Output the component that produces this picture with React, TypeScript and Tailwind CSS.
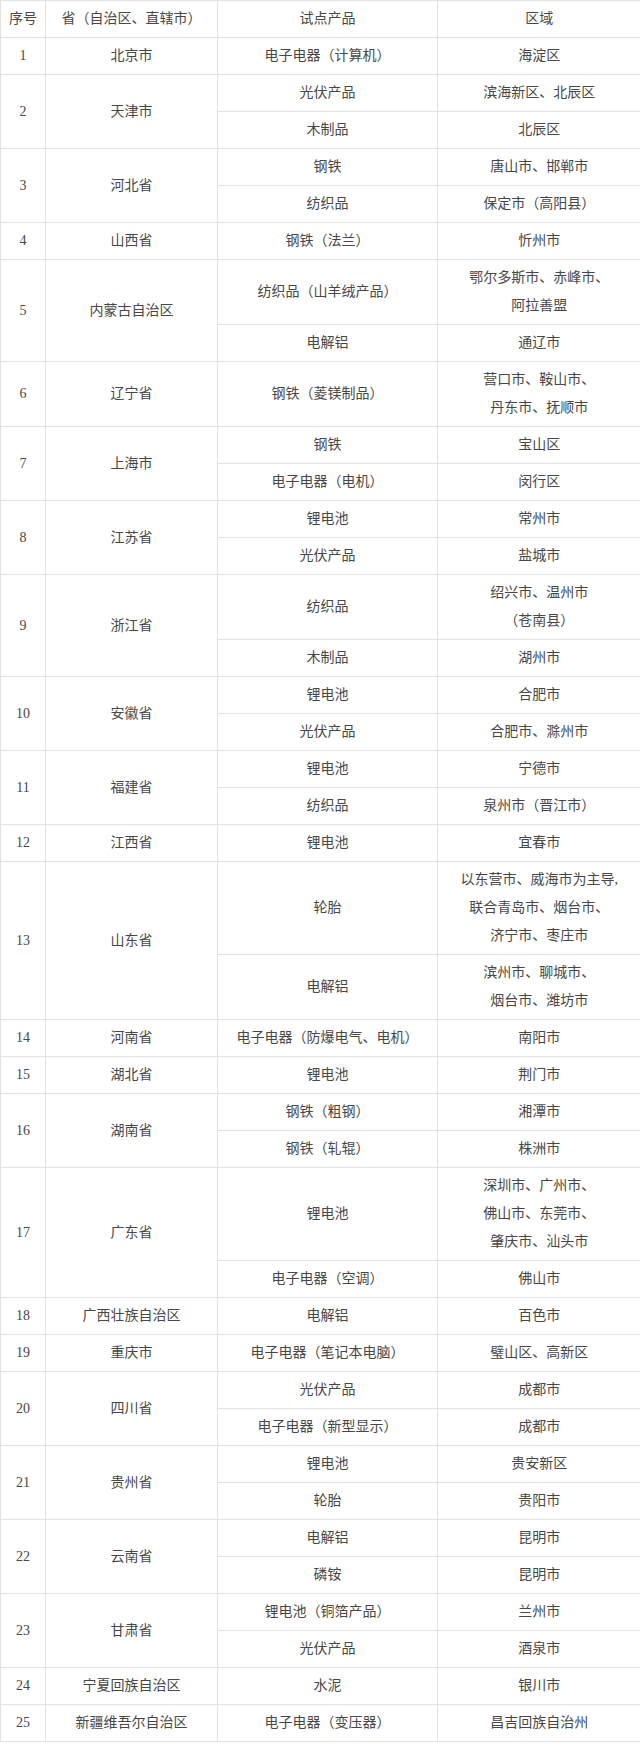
import React from "react";

type Row = { n: number; p: string; items: [string, string][] };

const rows: Row[] = [
  { n: 1, p: "北京市", items: [["电子电器（计算机）", "海淀区"]] },
  { n: 2, p: "天津市", items: [["光伏产品", "滨海新区、北辰区"], ["木制品", "北辰区"]] },
  { n: 3, p: "河北省", items: [["钢铁", "唐山市、邯郸市"], ["纺织品", "保定市（高阳县）"]] },
  { n: 4, p: "山西省", items: [["钢铁（法兰）", "忻州市"]] },
  { n: 5, p: "内蒙古自治区", items: [["纺织品（山羊绒产品）", "鄂尔多斯市、赤峰市、\n阿拉善盟"], ["电解铝", "通辽市"]] },
  { n: 6, p: "辽宁省", items: [["钢铁（菱镁制品）", "营口市、鞍山市、\n丹东市、抚顺市"]] },
  { n: 7, p: "上海市", items: [["钢铁", "宝山区"], ["电子电器（电机）", "闵行区"]] },
  { n: 8, p: "江苏省", items: [["锂电池", "常州市"], ["光伏产品", "盐城市"]] },
  { n: 9, p: "浙江省", items: [["纺织品", "绍兴市、温州市\n（苍南县）"], ["木制品", "湖州市"]] },
  { n: 10, p: "安徽省", items: [["锂电池", "合肥市"], ["光伏产品", "合肥市、滁州市"]] },
  { n: 11, p: "福建省", items: [["锂电池", "宁德市"], ["纺织品", "泉州市（晋江市）"]] },
  { n: 12, p: "江西省", items: [["锂电池", "宜春市"]] },
  { n: 13, p: "山东省", items: [["轮胎", "以东营市、威海市为主导,\n联合青岛市、烟台市、\n济宁市、枣庄市"], ["电解铝", "滨州市、聊城市、\n烟台市、潍坊市"]] },
  { n: 14, p: "河南省", items: [["电子电器（防爆电气、电机）", "南阳市"]] },
  { n: 15, p: "湖北省", items: [["锂电池", "荆门市"]] },
  { n: 16, p: "湖南省", items: [["钢铁（粗钢）", "湘潭市"], ["钢铁（轧辊）", "株洲市"]] },
  { n: 17, p: "广东省", items: [["锂电池", "深圳市、广州市、\n佛山市、东莞市、\n肇庆市、汕头市"], ["电子电器（空调）", "佛山市"]] },
  { n: 18, p: "广西壮族自治区", items: [["电解铝", "百色市"]] },
  { n: 19, p: "重庆市", items: [["电子电器（笔记本电脑）", "璧山区、高新区"]] },
  { n: 20, p: "四川省", items: [["光伏产品", "成都市"], ["电子电器（新型显示）", "成都市"]] },
  { n: 21, p: "贵州省", items: [["锂电池", "贵安新区"], ["轮胎", "贵阳市"]] },
  { n: 22, p: "云南省", items: [["电解铝", "昆明市"], ["磷铵", "昆明市"]] },
  { n: 23, p: "甘肃省", items: [["锂电池（铜箔产品）", "兰州市"], ["光伏产品", "酒泉市"]] },
  { n: 24, p: "宁夏回族自治区", items: [["水泥", "银川市"]] },
  { n: 25, p: "新疆维吾尔自治区", items: [["电子电器（变压器）", "昌吉回族自治州"]] },
];

const td =
  "border border-[#e2e2e2] px-1 py-1 text-center align-middle leading-[28px] whitespace-pre-line";
const tdLast =
  "border border-r-0 border-[#e2e2e2] px-1 py-1 text-center align-middle leading-[28px] whitespace-pre-line";

export default function App() {
  return (
    <div className="w-[640px] bg-white">
      <table
        className="w-[640px] table-fixed border-collapse text-[14px] text-[#474747]"
        style={{ fontFamily: '"Liberation Serif", "Noto Sans CJK SC", serif' }}
      >
        <colgroup>
          <col className="w-[45px]" />
          <col className="w-[172px]" />
          <col className="w-[220px]" />
          <col className="w-[203px]" />
        </colgroup>
        <tbody>
          <tr>
            <td className={td}>序号</td>
            <td className={td}>省（自治区、直辖市）</td>
            <td className={td}>试点产品</td>
            <td className={tdLast}>区域</td>
          </tr>
          {rows.map((r) =>
            r.items.map((it, i) => (
              <tr key={`${r.n}-${i}`}>
                {i === 0 && (
                  <>
                    <td className={td} rowSpan={r.items.length}>
                      {r.n}
                    </td>
                    <td className={td} rowSpan={r.items.length}>
                      {r.p}
                    </td>
                  </>
                )}
                <td className={td}>{it[0]}</td>
                <td className={tdLast}>{it[1]}</td>
              </tr>
            ))
          )}
        </tbody>
      </table>
    </div>
  );
}
